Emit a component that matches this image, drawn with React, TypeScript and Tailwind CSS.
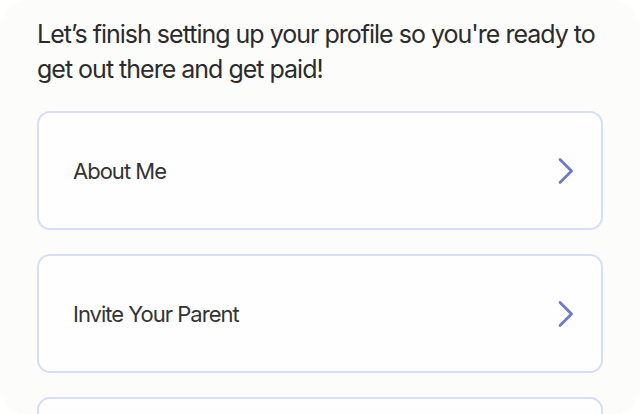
const steps = ["About Me", "Invite Your Parent", ""]

function StepCard({ label }: { label: string }) {
  return (
    <button className="flex h-[119px] w-full shrink-0 items-center justify-between rounded-[13px] border-2 border-[#d6def6] bg-[#fefefe] pl-[34px] pr-[26px] text-left">
      <span className="text-[22px] leading-none tracking-[-0.045em] text-[#333333]">{label}</span>
      {label && (
        <svg width="18" height="28" viewBox="0 0 18 28" fill="none">
          <path d="M3 2.5 L14.5 14 L3 25.5" stroke="#6a79c9" strokeWidth="2.8" strokeLinecap="round" strokeLinejoin="round" />
        </svg>
      )}
    </button>
  )
}

export default function App() {
  return (
    <div className="h-[414px] w-[640px] overflow-hidden bg-white" style={{ fontFamily: "Inter, 'Noto Sans', sans-serif" }}>
      <div className="flex h-[416px] flex-col rounded-[30px] bg-[#fcfcfb] px-[37px] pt-[17px]">
        <p className="text-[25px] leading-[35px] tracking-[-0.04em] text-[#2b2b2b]">
          Let’s finish setting up your profile so you're ready to get out there and get paid!
        </p>
        <div className="mt-[24px] flex flex-col gap-[24px]">
          {steps.map((s, i) => (
            <StepCard key={i} label={s} />
          ))}
        </div>
      </div>
    </div>
  )
}
